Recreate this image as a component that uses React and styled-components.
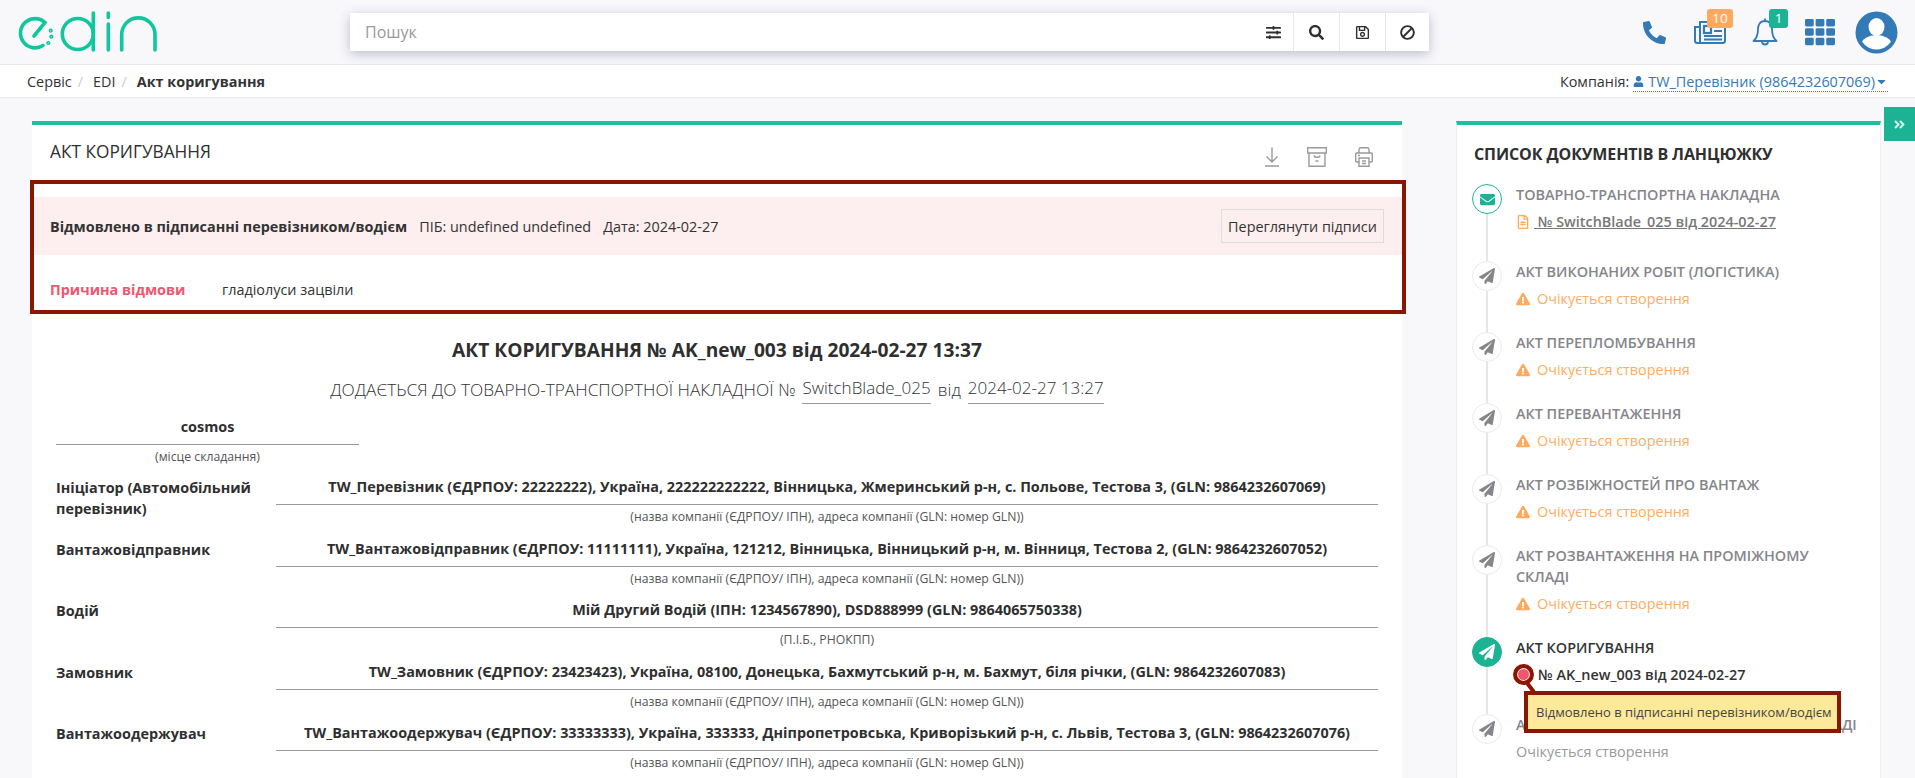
import React from "react";
import styled, { createGlobalStyle } from "styled-components";
import {
  FaAngleDoubleRight,
  FaBan,
  FaCaretDown,
  FaEnvelope,
  FaExclamationTriangle,
  FaPaperPlane,
  FaPhoneAlt,
  FaRegFileAlt,
  FaRegSave,
  FaSearch,
  FaSlidersH,
  FaTh,
  FaUser,
} from "react-icons/fa";

const GlobalStyle = createGlobalStyle`
  html, body {
    margin: 0;
    height: 100%;
    overflow: hidden;
    background: #f8f8fb;
    font-family: "Open Sans", "Liberation Sans", sans-serif;
    font-size: 14.4px;
    color: #333;
  }
  * { box-sizing: border-box; }
`;

const Page = styled.div`
  position: relative;
  width: 1915px;
  height: 778px;
  overflow: hidden;
`;

const TopBar = styled.header`
  display: flex;
  align-items: center;
  height: 65px;
  border-bottom: 1px solid #e7eaec;
  padding-left: 10px;
`;

const LogoMark = styled.svg`
  width: 160px;
  height: 56px;
  flex: none;
  fill: none;
  stroke: #10c69c;
  stroke-width: 3.6;
  stroke-linecap: round;
`;

const SearchBox = styled.div`
  display: flex;
  align-items: stretch;
  width: 1079px;
  height: 38px;
  margin-left: 180px;
  background: #fff;
  box-shadow: 0 3px 12px rgba(50, 50, 90, 0.3);
`;

const SearchInput = styled.div`
  flex: 1;
  display: flex;
  align-items: center;
  padding-left: 15px;
  font-size: 16px;
  color: #999;
`;

const SearchButton = styled.div`
  width: ${(p) => p.$w || 46}px;
  display: flex;
  align-items: center;
  justify-content: center;
  font-size: 15px;
  padding-right: ${(p) => (p.$plain ? 5 : 0)}px;
  color: #2f2f2f;
  border-left: ${(p) => (p.$plain ? "none" : "1px solid #e7e7e7")};
`;

const ClearIcon = styled(FaBan)`
  transform: scaleX(-1);
`;

const TopIcons = styled.div`
  display: flex;
  margin-left: auto;
  padding-right: 13px;
  color: #337ab7;
`;

const TopIconCell = styled.div`
  position: relative;
  width: 55px;
  height: 64px;
  display: flex;
  align-items: center;
  justify-content: center;
`;

const CountBadge = styled.span`
  position: absolute;
  top: 9px;
  left: ${(p) => p.$left}px;
  min-width: ${(p) => p.$width}px;
  height: 19px;
  line-height: 19px;
  text-align: center;
  border-radius: 3px;
  font-size: 13.5px;
  color: #fff;
  background: ${(p) => p.$color};
`;

const AvatarSvg = styled.svg`
  margin-left: 3px;
`;

const CrumbBar = styled.div`
  display: flex;
  align-items: center;
  justify-content: space-between;
  height: 33px;
  background: #fff;
  border-bottom: 1px solid #e7eaec;
  padding: 0 27px;
`;

const Crumbs = styled.div`
  display: flex;
  align-items: center;
`;

const CrumbSep = styled.span`
  color: #ccc;
  margin: 0 10px 0 6px;
`;

const CrumbCurrent = styled.b`
  font-weight: 700;
`;

const CompanyPicker = styled.div`
  display: flex;
  align-items: center;
  gap: 4px;
`;

const CompanyLink = styled.span`
  display: flex;
  align-items: center;
  gap: 3px;
  color: #337ab7;
  border-bottom: 1px dotted #337ab7;
  line-height: 19px;
  margin-top: 1px;

  svg:first-child { margin-right: 1px; }
  svg:last-child { margin-left: -3px; }
`;

const Content = styled.main`
  display: grid;
  grid-template-columns: 1370px 425px;
  column-gap: 54px;
  padding: 23px 0 0 32px;
`;

const Panel = styled.section`
  background: #fff;
  border-top: 4px solid #1cc09e;
  height: 800px;
`;

const SidePanel = styled(Panel)`
  border-left: 1px solid #eee;
  border-right: 1px solid #eee;
  padding: 18px 17px 0 17px;
`;

const PanelHead = styled.div`
  display: flex;
  align-items: center;
  justify-content: space-between;
  height: 55px;
  padding: 0 29px 0 18px;
`;

const PanelTitle = styled.h2`
  margin: 0 0 2px;
  font-size: 17.28px;
  font-weight: 400;
  color: #2f2f2f;
`;

const HeadActions = styled.div`
  display: flex;
  align-items: center;
  gap: 28px;
  margin-top: 8px;
`;

const LineIcon = styled.svg`
  display: block;
  fill: none;
  stroke: #9a9a9a;
  stroke-width: 1.4;
`;

const AlertFrame = styled.div`
  margin: 0 -4px 0 -2px;
  height: 134px;
  border: 4px solid #8b1600;
  padding-top: 13px;
`;

const AlertBar = styled.div`
  display: flex;
  align-items: center;
  height: 58px;
  background: #fdeeef;
  padding: 0 18px 0 16px;
`;

const AlertStrong = styled.b`
  font-weight: 700;
`;

const AlertMeta = styled.span`
  margin-left: ${(p) => p.$gap}px;
`;

const OutlineButton = styled.div`
  margin-left: auto;
  height: 34px;
  width: 163px;
  display: flex;
  align-items: center;
  justify-content: center;
  border: 1px solid #ddd;
  color: #333;
`;

const ReasonRow = styled.div`
  display: flex;
  margin-top: 25px;
  padding-left: 16px;
  line-height: 20px;
`;

const ReasonLabel = styled.b`
  width: 172px;
  font-weight: 700;
  color: #f0566f;
`;

const FormBody = styled.div`
  padding: 0 24px;
`;

const DocTitle = styled.h1`
  margin: 24px 0 0;
  font-size: 19.2px;
  line-height: 24px;
  font-weight: 700;
  text-align: center;
  color: #2f2f2f;
`;

const DocSubtitle = styled.div`
  display: flex;
  justify-content: center;
  align-items: flex-start;
  gap: 7px;
  margin-top: 16px;
  font-size: 17.28px;
  font-weight: 300;
  line-height: 24px;
  height: 26px;
`;

const FilledValue = styled.span`
  border-bottom: 1px solid #999;
  height: 26px;
  line-height: 20px;
  font-size: 17px;
  font-weight: 300;
`;

const PlaceBlock = styled.div`
  width: 303px;
  margin: 13px 0 12px;
  text-align: center;
`;

const FieldValue = styled.div`
  border-bottom: 1px solid #999;
  height: 28px;
  line-height: 20px;
  font-weight: 700;
  text-align: center;
  color: #2f2f2f;
`;

const FieldHint = styled.div`
  font-size: 12.24px;
  line-height: 16px;
  padding-top: 4px;
  text-align: center;
  color: #555;
`;

const PartyRow = styled.div`
  display: grid;
  grid-template-columns: 220px 1fr;
  height: 61.5px;
`;

const PartyLabel = styled.div`
  font-weight: 700;
  line-height: 21px;
  padding-right: 10px;
  color: #2f2f2f;
`;

const SideTitle = styled.h2`
  margin: 0;
  font-size: 16px;
  line-height: 22px;
  font-weight: 700;
  color: #2f2f2f;
  letter-spacing: -0.1px;
`;

const Chain = styled.div`
  margin: 19px 0 0 -2px;
`;

const ChainItem = styled.div`
  position: relative;
  display: grid;
  grid-template-columns: 30px 1fr;
  column-gap: 14px;
  padding-bottom: ${(p) => (p.$tall ? 29 : 23)}px;

  &::before {
    content: "";
    position: absolute;
    left: 14px;
    top: 0;
    bottom: -5px;
    width: 2px;
    background: #e6e6e6;
  }
  &:last-child::before { display: none; }
`;

const ChainBullet = styled.div`
  position: relative;
  width: 30px;
  height: 30px;
  display: flex;
  align-items: center;
  justify-content: center;
  border-radius: 50%;
  font-size: 16px;
  background: ${(p) => (p.$kind === "active" ? "#1cb394" : "#fff")};
  color: ${(p) =>
    p.$kind === "active" ? "#fff" : p.$kind === "mail" ? "#1cb394" : "#85858a"};
  border: 1px solid
    ${(p) =>
      p.$kind === "active" || p.$kind === "mail" ? "#1cb394" : "#ebebeb"};
`;

const ChainName = styled.div`
  font-weight: 600;
  line-height: 21px;
  color: ${(p) => (p.$active ? "#333" : "#85858a")};
  white-space: ${(p) => (p.$nowrap ? "nowrap" : "normal")};
  letter-spacing: ${(p) => (p.$nowrap ? "-0.15px" : "normal")};
  padding-right: 20px;
`;

const ChainStatus = styled.div`
  display: flex;
  align-items: center;
  margin-top: 6px;
  line-height: 21px;
  color: ${(p) => p.$color || "#ffad60"};
  font-weight: ${(p) => p.$weight || 400};
`;

const StatusIcon = styled.span`
  display: flex;
  width: ${(p) => p.$w || 21}px;
  flex: none;
  font-size: 14px;
  color: ${(p) => p.$color || "#ffa95c"};
`;

const DocLink = styled.span`
  text-decoration: underline;
  white-space: pre;
`;

const RejectDot = styled.span`
  position: relative;
  display: block;
  width: 22px;
  height: 20px;
  flex: none;

  &::before {
    content: "";
    box-sizing: border-box;
    position: absolute;
    left: -3.5px;
    top: -0.5px;
    width: 21px;
    height: 21px;
    border-radius: 50%;
    background: #f0566f;
    border: 4px solid #8b1600;
    box-shadow: inset 0 0 0 1px #fff;
  }
  &::after {
    content: "";
    position: absolute;
    left: 11px;
    top: 16px;
    width: 11px;
    height: 4px;
    background: #8b1600;
    transform: rotate(52deg);
    transform-origin: left center;
  }
`;

const RejectNote = styled.div`
  position: absolute;
  left: 52px;
  top: 54px;
  z-index: 2;
  width: 317px;
  height: 42px;
  display: flex;
  align-items: center;
  padding-left: 8px;
  border: 4px solid #8b1600;
  background: #fce99a;
  font-size: 13px;
  color: #444;
  white-space: nowrap;
`;

const DrawerTab = styled.div`
  position: absolute;
  top: 107px;
  right: 0;
  width: 31px;
  height: 34px;
  display: flex;
  align-items: center;
  justify-content: center;
  background: #1cb394;
  color: #cdf3ea;
  font-size: 13px;
`;

const Logo = () => (
  <LogoMark viewBox="0 0 160 56">
    <path d="M33 41.5A14.6 14.6 0 1 1 35 18.5L24 32" />
    <circle cx="40.7" cy="26.7" r="1.3" strokeWidth="1.6" />
    <circle cx="41.3" cy="32.7" r="1.3" strokeWidth="1.6" />
    <circle cx="38.3" cy="39" r="1.3" strokeWidth="1.6" />
    <circle cx="67.8" cy="30" r="15.5" />
    <path d="M83.3 9V46M98.3 9V13.5M98.3 20V46" />
    <path d="M111.7 46V30.5A16.65 16.65 0 0 1 145 30.5V46" />
  </LogoMark>
);

const NewsIcon = () => (
  <svg width="33" height="24" viewBox="0 0 33 24" fill="none" stroke="#337ab7" strokeWidth="2">
    <path d="M7 7H2V20.5A2.5 2.5 0 0 0 4.5 23H29.5A2.5 2.5 0 0 0 32 20.5V2H7V23" />
    <rect x="11" y="6" width="7" height="7" strokeWidth="2.2" />
    <path d="M21 7H29M21 11H29M11 16H29M11 19.5H29" />
  </svg>
);

const BellIcon = () => (
  <svg width="26" height="30" viewBox="0 0 26 30" fill="none" stroke="#337ab7" strokeWidth="1.8" strokeLinejoin="round">
    <path d="M13 4C8 4 6 8 6 12C6 18 4.5 21.5 1.5 24H24.5C21.5 21.5 20 18 20 12C20 8 18 4 13 4Z" />
    <path d="M13 1.5V4M10 24.5A3 3 0 0 0 16 24.5" />
  </svg>
);

const AvatarIcon = () => (
  <AvatarSvg width="43" height="43" viewBox="0 0 43 43">
    <defs>
      <clipPath id="avatarClip">
        <circle cx="21.5" cy="21.5" r="17" />
      </clipPath>
    </defs>
    <circle cx="21.5" cy="21.5" r="21" fill="#337ab7" />
    <g clipPath="url(#avatarClip)">
      <ellipse cx="21.5" cy="33" rx="15" ry="9" fill="#fff" />
      <ellipse cx="21.5" cy="16" rx="8" ry="9" fill="#fff" />
    </g>
  </AvatarSvg>
);

const DownloadIcon = () => (
  <LineIcon width="14" height="20" viewBox="0 0 14 20">
    <path d="M7 0.5V15M1.5 9.5L7 15L12.5 9.5M0 19H14" />
  </LineIcon>
);

const ArchiveIcon = () => (
  <LineIcon width="20" height="20" viewBox="0 0 20 20">
    <path d="M0.7 0.7H19.3V6H0.7ZM2 6V19.3H18V6M7 8.5C7.5 11 12.5 11 13 8.5M8.5 14H11.5" />
  </LineIcon>
);

const PrinterIcon = () => (
  <LineIcon width="18" height="20" viewBox="0 0 18 20">
    <path d="M4 6V2.5A2 2 0 0 1 6 0.7H12A2 2 0 0 1 14 2.5V6M4 15H1.7A1 1 0 0 1 0.7 14V7A1 1 0 0 1 1.7 6H16.3A1 1 0 0 1 17.3 7V14A1 1 0 0 1 16.3 15H14" />
    <path d="M4 11H14V19.3H4ZM3 8.5H5M7 14H11M7 16.5H11" />
  </LineIcon>
);

const parties = [
  {
    label: "Ініціатор (Автомобільний перевізник)",
    value:
      "TW_Перевізник (ЄДРПОУ: 22222222), Україна, 222222222222, Вінницька, Жмеринський р-н, с. Польове, Тестова 3, (GLN: 9864232607069)",
    hint: "(назва компанії (ЄДРПОУ/ ІПН), адреса компанії (GLN: номер GLN))",
  },
  {
    label: "Вантажовідправник",
    value:
      "TW_Вантажовідправник (ЄДРПОУ: 11111111), Україна, 121212, Вінницька, Вінницький р-н, м. Вінниця, Тестова 2, (GLN: 9864232607052)",
    hint: "(назва компанії (ЄДРПОУ/ ІПН), адреса компанії (GLN: номер GLN))",
  },
  {
    label: "Водій",
    value: "Мій Другий Водій (ІПН: 1234567890), DSD888999 (GLN: 9864065750338)",
    hint: "(П.І.Б., РНОКПП)",
  },
  {
    label: "Замовник",
    value:
      "TW_Замовник (ЄДРПОУ: 23423423), Україна, 08100, Донецька, Бахмутський р-н, м. Бахмут, біля річки, (GLN: 9864232607083)",
    hint: "(назва компанії (ЄДРПОУ/ ІПН), адреса компанії (GLN: номер GLN))",
  },
  {
    label: "Вантажоодержувач",
    value:
      "TW_Вантажоодержувач (ЄДРПОУ: 33333333), Україна, 333333, Дніпропетровська, Криворізький р-н, с. Львів, Тестова 3, (GLN: 9864232607076)",
    hint: "(назва компанії (ЄДРПОУ/ ІПН), адреса компанії (GLN: номер GLN))",
  },
];

const pendingDocs = [
  "АКТ ВИКОНАНИХ РОБІТ (ЛОГІСТИКА)",
  "АКТ ПЕРЕПЛОМБУВАННЯ",
  "АКТ ПЕРЕВАНТАЖЕННЯ",
  "АКТ РОЗБІЖНОСТЕЙ ПРО ВАНТАЖ",
  "АКТ РОЗВАНТАЖЕННЯ НА ПРОМІЖНОМУ СКЛАДІ",
];

export default function App() {
  return (
    <Page>
      <GlobalStyle />
      <TopBar>
        <Logo />
        <SearchBox>
          <SearchInput>Пошук</SearchInput>
          <SearchButton $plain $w={34}>
            <FaSlidersH />
          </SearchButton>
          <SearchButton>
            <FaSearch />
          </SearchButton>
          <SearchButton>
            <FaRegSave />
          </SearchButton>
          <SearchButton $w={44}>
            <ClearIcon />
          </SearchButton>
        </SearchBox>
        <TopIcons>
          <TopIconCell>
            <FaPhoneAlt size={23} />
          </TopIconCell>
          <TopIconCell>
            <NewsIcon />
            <CountBadge $left={25} $width={26} $color="#ffa95c">
              10
            </CountBadge>
          </TopIconCell>
          <TopIconCell>
            <BellIcon />
            <CountBadge $left={32} $width={19} $color="#1cb394">
              1
            </CountBadge>
          </TopIconCell>
          <TopIconCell>
            <FaTh size={30} />
          </TopIconCell>
          <TopIconCell>
            <AvatarIcon />
          </TopIconCell>
        </TopIcons>
      </TopBar>

      <CrumbBar>
        <Crumbs>
          Сервіс
          <CrumbSep>/</CrumbSep>
          EDI
          <CrumbSep>/</CrumbSep>
          <CrumbCurrent>Акт коригування</CrumbCurrent>
        </Crumbs>
        <CompanyPicker>
          Компанія:
          <CompanyLink>
            <FaUser size={11} />
            TW_Перевізник (9864232607069)
            <FaCaretDown size={13} />
          </CompanyLink>
        </CompanyPicker>
      </CrumbBar>

      <Content>
        <Panel>
          <PanelHead>
            <PanelTitle>АКТ КОРИГУВАННЯ</PanelTitle>
            <HeadActions>
              <DownloadIcon />
              <ArchiveIcon />
              <PrinterIcon />
            </HeadActions>
          </PanelHead>

          <AlertFrame>
            <AlertBar>
              <AlertStrong>Відмовлено в підписанні перевізником/водієм</AlertStrong>
              <AlertMeta $gap={12}>ПІБ: undefined undefined</AlertMeta>
              <AlertMeta $gap={12}>Дата: 2024-02-27</AlertMeta>
              <OutlineButton>Переглянути підписи</OutlineButton>
            </AlertBar>
            <ReasonRow>
              <ReasonLabel>Причина відмови</ReasonLabel>
              гладіолуси зацвіли
            </ReasonRow>
          </AlertFrame>

          <FormBody>
            <DocTitle>АКТ КОРИГУВАННЯ № AK_new_003 від 2024-02-27 13:37</DocTitle>
            <DocSubtitle>
              ДОДАЄТЬСЯ ДО ТОВАРНО-ТРАНСПОРТНОЇ НАКЛАДНОЇ №
              <FilledValue>SwitchBlade_025</FilledValue>
              від
              <FilledValue>2024-02-27 13:27</FilledValue>
            </DocSubtitle>

            <PlaceBlock>
              <FieldValue>cosmos</FieldValue>
              <FieldHint>(місце складання)</FieldHint>
            </PlaceBlock>

            {parties.map((party) => (
              <PartyRow key={party.label}>
                <PartyLabel>{party.label}</PartyLabel>
                <div>
                  <FieldValue>{party.value}</FieldValue>
                  <FieldHint>{party.hint}</FieldHint>
                </div>
              </PartyRow>
            ))}
          </FormBody>
        </Panel>

        <SidePanel>
          <SideTitle>СПИСОК ДОКУМЕНТІВ В ЛАНЦЮЖКУ</SideTitle>
          <Chain>
            <ChainItem $tall>
              <ChainBullet $kind="mail">
                <FaEnvelope size={15} />
              </ChainBullet>
              <div>
                <ChainName>ТОВАРНО-ТРАНСПОРТНА НАКЛАДНА</ChainName>
                <ChainStatus $color="#777" $weight={600}>
                  <StatusIcon $w={18}>
                    <FaRegFileAlt />
                  </StatusIcon>
                  <DocLink> № SwitchBlade_025 від 2024-02-27</DocLink>
                </ChainStatus>
              </div>
            </ChainItem>

            {pendingDocs.map((name) => (
              <ChainItem key={name}>
                <ChainBullet>
                  <FaPaperPlane />
                </ChainBullet>
                <div>
                  <ChainName>{name}</ChainName>
                  <ChainStatus>
                    <StatusIcon>
                      <FaExclamationTriangle />
                    </StatusIcon>
                    Очікується створення
                  </ChainStatus>
                </div>
              </ChainItem>
            ))}

            <ChainItem $tall>
              <ChainBullet $kind="active">
                <FaPaperPlane />
              </ChainBullet>
              <div>
                <ChainName $active>АКТ КОРИГУВАННЯ</ChainName>
                <ChainStatus $color="#333" $weight={600}>
                  <RejectDot />
                  № AK_new_003 від 2024-02-27
                </ChainStatus>
                <RejectNote>Відмовлено в підписанні перевізником/водієм</RejectNote>
              </div>
            </ChainItem>

            <ChainItem>
              <ChainBullet>
                <FaPaperPlane />
              </ChainBullet>
              <div>
                <ChainName $nowrap>АКТ РОЗВАНТАЖЕННЯ НА ОСТАННЬОМУ СКЛАДІ</ChainName>
                <ChainStatus $color="#999">Очікується створення</ChainStatus>
              </div>
            </ChainItem>
          </Chain>
        </SidePanel>
      </Content>

      <DrawerTab>
        <FaAngleDoubleRight />
      </DrawerTab>
    </Page>
  );
}
